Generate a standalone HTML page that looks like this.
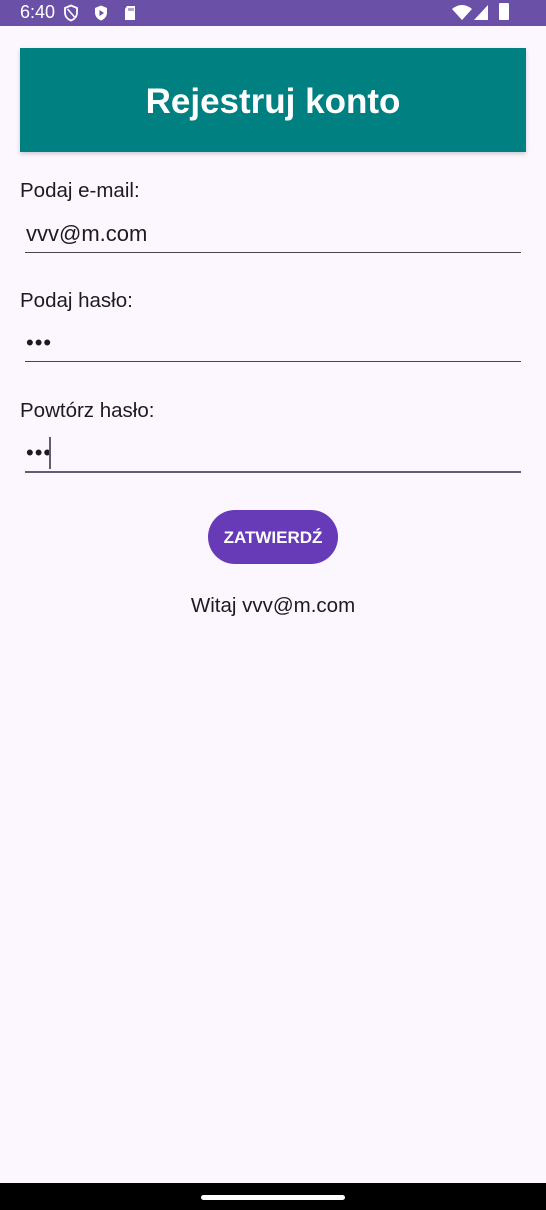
<!DOCTYPE html>
<html><head><meta charset="utf-8"><style>
body{margin:0;width:546px;height:1210px;background:#fcf6fe;font-family:"Liberation Sans",Roboto,sans-serif;position:relative;overflow:hidden}
.abs{position:absolute}
.sb{left:0;top:0;width:546px;height:26px;background:#6a50a7;color:#fff}
.hdr{left:20px;top:48px;width:506px;height:104px;background:#008080;box-shadow:0 2px 4px rgba(0,0,0,.18);color:#fff;font-weight:bold;font-size:35px;text-align:center;line-height:108px}
.lbl{left:20px;font-size:20.5px;color:#1d1b20}
.val{left:26px;font-size:22px;color:#1d1b20}
.line{left:25px;width:496px;height:1px;background:#49454f}
</style></head><body>
<div class="abs sb">
<span class="abs" style="left:20px;top:2px;font-size:18px">6:40</span>
<svg class="abs" style="left:62px;top:4px" width="18" height="18" viewBox="0 0 18 18"><path d="M9 1.5L3 4v4.5c0 4 2.6 6.8 6 8 3.4-1.2 6-4 6-8V4z" fill="none" stroke="#fff" stroke-width="1.8"/><path d="M5.5 5l7 8" stroke="#fff" stroke-width="1.6"/></svg>
<svg class="abs" style="left:92px;top:4px" width="18" height="18" viewBox="0 0 18 18"><path d="M9 1.5L3 4v4.5c0 4 2.6 6.8 6 8 3.4-1.2 6-4 6-8V4z" fill="#fff"/><path d="M7.5 6v6l4.5-3z" fill="#6a50a7"/></svg>
<svg class="abs" style="left:122px;top:4px" width="16" height="18" viewBox="0 0 16 18"><path d="M5 2h8v14H3V5z" fill="#fff"/><path d="M7 4v3M9 4v3M11 4v3" stroke="#6a50a7" stroke-width="1"/></svg>
<svg class="abs" style="left:451px;top:4px" width="22" height="18" viewBox="0 0 22 18"><path d="M1 5Q11-3 21 5L11 16z" fill="#fff"/></svg>
<svg class="abs" style="left:473px;top:4px" width="16" height="17" viewBox="0 0 16 17"><path d="M15 1V16H1z" fill="#fff"/></svg>
<div class="abs" style="left:499px;top:3px;width:10px;height:17px;background:#fff;border-radius:1px"></div>
</div>
<div class="abs hdr">Rejestruj konto</div>
<div class="abs lbl" style="top:179px">Podaj e-mail:</div>
<div class="abs val" style="top:221px">vvv@m.com</div>
<div class="abs line" style="top:252px"></div>
<div class="abs lbl" style="top:289px">Podaj hasło:</div>
<div class="abs val" style="top:330px;letter-spacing:1px">•••</div>
<div class="abs line" style="top:361px"></div>
<div class="abs lbl" style="top:399px">Powtórz hasło:</div>
<div class="abs val" style="top:440px;letter-spacing:1px">•••</div>
<div class="abs" style="left:49px;top:437px;width:2px;height:32px;background:#625b71"></div>
<div class="abs line" style="top:471px;height:2px;background:#625b71"></div>
<div class="abs" style="left:208px;top:510px;width:130px;height:54px;border-radius:27px;background:#673ab7;color:#fff;font-size:17px;font-weight:bold;text-align:center;line-height:55px">ZATWIERDŹ</div>
<div class="abs" style="left:0;width:546px;top:594px;text-align:center;font-size:20.5px;color:#1d1b20">Witaj vvv@m.com</div>
<div class="abs" style="left:0;top:1183px;width:546px;height:27px;background:#000"></div>
<div class="abs" style="left:201px;top:1195px;width:144px;height:5px;border-radius:3px;background:#fff"></div>
</body></html>
